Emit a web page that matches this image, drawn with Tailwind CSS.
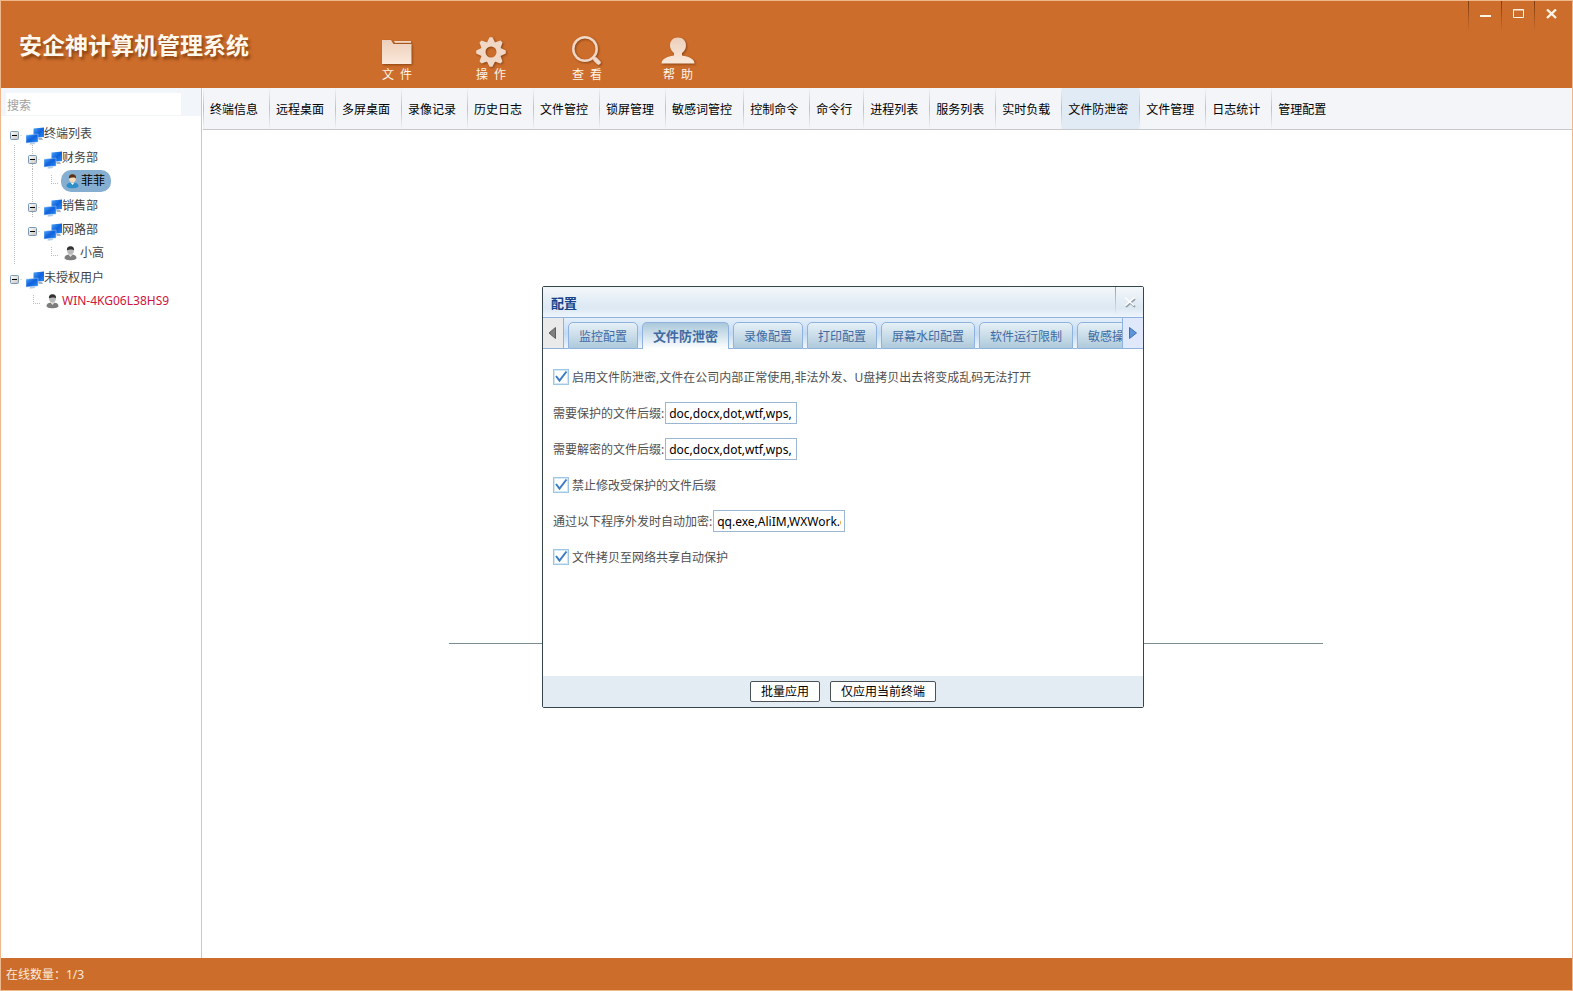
<!DOCTYPE html>
<html lang="zh-CN">
<head>
<meta charset="utf-8">
<title>安企神计算机管理系统</title>
<script src="https://cdn.jsdelivr.net/npm/@tailwindcss/browser@4"></script>
</head>
<body class="h-screen overflow-hidden bg-white font-['Noto_Sans','Noto_Sans_CJK_SC',sans-serif] text-xs text-[#444]">

<svg class="absolute h-0 w-0" aria-hidden="true">
  <defs>
    <linearGradient id="cream" x1="0" y1="0" x2="0" y2="1"><stop offset="0" stop-color="#eccfba"/><stop offset="1" stop-color="#fbe8da"/></linearGradient>
    <linearGradient id="screen" x1="0" y1="0" x2="1" y2="1"><stop offset="0" stop-color="#4fa6fb"/><stop offset=".5" stop-color="#0f62dc"/><stop offset="1" stop-color="#2b8cf5"/></linearGradient>
    <linearGradient id="knob" x1="0" y1="0" x2="1" y2="1"><stop offset="0" stop-color="#fff"/><stop offset="1" stop-color="#c9c3b8"/></linearGradient>
    <symbol id="pcs" viewBox="0 0 18 18">
      <path d="M12 11h4l1 2h-4z" fill="#a9b2bd"/>
      <path d="M7.500 1.500L18 .5v9.500l-10.500 1z" fill="url(#screen)"/>
      <path d="M0 8.200l12-1.200v8l-12 1z" fill="url(#screen)" stroke="#b7d3f3" stroke-width=".5"/>
      <path d="M4 16l4-.5 1.500 1.500-6 .7z" fill="#b5cbe0"/>
    </symbol>
    <symbol id="toggle" viewBox="0 0 18 24">
      <rect x="5.500" y="10.500" width="8" height="8" rx="1" fill="url(#knob)" stroke="#7898b5"/>
      <path d="M7 14.500h5" stroke="#000"/>
      <path d="M15.500 14.500h2" stroke="#bbb" stroke-dasharray="1 1"/>
    </symbol>
    <symbol id="toggle-down" viewBox="0 0 18 24">
      <path d="M9.500 0v10M9.500 19v5" stroke="#bbb" stroke-dasharray="1 1"/>
      <use href="#toggle"/>
    </symbol>
    <symbol id="line" viewBox="0 0 18 24"><path d="M9.500 0v24" stroke="#bbb" stroke-dasharray="1 1"/></symbol>
    <symbol id="elbow" viewBox="0 0 18 24"><path d="M10.500 6v9.500M10 14.500h9" fill="none" stroke="#bbb" stroke-dasharray="1 1"/></symbol>
    <symbol id="man" viewBox="0 0 13 15">
      <path d="M.5 12C.5 9.500 3 8.500 6.500 8.500S12.500 9.500 12.500 12c0 3-12 3-12 0z" fill="#7d7d7d"/>
      <path d="M4.500 8.500l2 2.500 2-2.500z" fill="#e5e5e5"/>
      <circle cx="6.500" cy="5" r="3.300" fill="#b9b9b9"/>
      <path d="M3 4.500C2.500 1.500 4.500.3 6.500.3S10.500 1.500 10 4.500C9 3 5 3.500 3 4.500z" fill="#333"/>
    </symbol>
  </defs>
</svg>

<div class="flex h-full flex-col border border-[#efb88c] bg-white">

  <header class="flex h-[87px] shrink-0 items-start bg-[#cd6d2b] text-white">
    <h1 class="w-[349px] shrink-0 pt-[26px] pl-[18px] text-[23px] leading-9 font-bold text-[#fff8ec] [text-shadow:2px_3px_3px_rgb(90_40_5/0.6)]">安企神计算机管理系统</h1>
    <nav class="grid flex-1 grid-cols-[94px_94px_98px_84px] pt-[34px]" aria-label="主菜单">
      <button class="flex flex-col items-center text-[#fff6e8]">
        <svg class="h-8 w-9 drop-shadow-[1px_1px_1px_rgb(90_40_5/0.6)]" viewBox="0 0 36 32" fill="url(#cream)"><path d="M3 5h9l2.500 4H32.500V29H3z"/><path d="M15 6h17v1.800H16z"/></svg>
        <span class="leading-4">文&nbsp; 件</span>
      </button>
      <button class="flex flex-col items-center text-[#fff6e8]">
        <svg class="h-8 w-9 drop-shadow-[1px_1px_1px_rgb(90_40_5/0.6)]" viewBox="0 0 36 32" fill="none"><g transform="translate(18 17)"><circle r="8" stroke="#f1d8c6" stroke-width="5"/><g fill="#f1d8c6"><path id="t" d="M-4-9.500L-1.500-14.800H1.500L4-9.500z"/><use href="#t" transform="rotate(45)"/><use href="#t" transform="rotate(90)"/><use href="#t" transform="rotate(135)"/><use href="#t" transform="rotate(180)"/><use href="#t" transform="rotate(225)"/><use href="#t" transform="rotate(270)"/><use href="#t" transform="rotate(315)"/></g></g></svg>
        <span class="leading-4">操&nbsp; 作</span>
      </button>
      <button class="flex flex-col items-center text-[#fff6e8]">
        <svg class="h-8 w-9 drop-shadow-[1px_1px_1px_rgb(90_40_5/0.6)]" viewBox="0 0 36 32" fill="none" stroke="#f1d8c6"><circle cx="16" cy="14" r="11.700" stroke-width="2.500"/><path d="M23.500 21.500l2 2" stroke-width="2"/><path d="M26.500 24.500l3 3" stroke-width="4.500" stroke-linecap="round"/></svg>
        <span class="leading-4">查&nbsp; 看</span>
      </button>
      <button class="flex flex-col items-center text-[#fff6e8]">
        <svg class="h-8 w-9 drop-shadow-[1px_1px_1px_rgb(90_40_5/0.6)]" viewBox="0 0 36 32" fill="url(#cream)"><path d="M18 2.500c5 0 8 3.500 8 8 0 3.500-2 6-4 7.500v2.500c7 1 12.500 3.500 12.500 8H1.500c0-4.500 5.500-7 12.500-8V18c-2-1.500-4-4-4-7.500 0-4.500 3-8 8-8z"/></svg>
        <span class="leading-4">帮&nbsp; 助</span>
      </button>
    </nav>
    <div class="flex pr-1">
      <button class="flex h-[30px] w-[33px] items-start justify-center border-l [border-image:linear-gradient(#7d3a0c,#cd6d2b)_1] pt-2" aria-label="最小化"><svg class="h-[10px] w-[11px]" viewBox="0 0 11 10"><path d="M0 7h11" stroke="#fff3e6" stroke-width="2"/></svg></button>
      <button class="flex h-[30px] w-[33px] items-start justify-center border-l [border-image:linear-gradient(#7d3a0c,#cd6d2b)_1] pt-2" aria-label="最大化"><svg class="h-[10px] w-[11px]" viewBox="0 0 11 10" fill="none" stroke="#fff3e6"><path d="M.5 .5h10v8H.500zM0 1h11"/></svg></button>
      <button class="flex h-[30px] w-[34px] items-start justify-center border-l [border-image:linear-gradient(#7d3a0c,#cd6d2b)_1] pt-2" aria-label="关闭"><svg class="h-[10px] w-[11px]" viewBox="0 0 11 10"><path d="M1 .5l9 8.500M10 .5L1 9" stroke="#fff3e6" stroke-width="2.400"/></svg></button>
    </div>
  </header>

  <div class="flex min-h-0 flex-1">
    <aside class="w-[201px] shrink-0 border-r border-[#c8c8c8]">
      <div class="h-7 bg-[#f2f5fa] pt-[5px] pl-[5px]">
        <input type="text" aria-label="搜索" placeholder="搜索" class="block h-[22px] w-[175px] bg-white px-px pt-[2px] outline-none placeholder:text-[#a0a0a0]">
      </div>
      <ul class="pt-[5px] pl-1 leading-[26px]">
        <li>
          <div class="flex h-6"><svg class="mr-[3px] h-6 w-[18px]"><use href="#toggle"/></svg><svg class="mt-[6px] h-[18px] w-[18px]"><use href="#pcs"/></svg><span>终端列表</span></div>
          <ul>
            <li>
              <div class="flex h-6"><svg class="h-6 w-[18px]"><use href="#line"/></svg><svg class="mr-[3px] h-6 w-[18px]"><use href="#toggle-down"/></svg><svg class="mt-[6px] h-[18px] w-[18px]"><use href="#pcs"/></svg><span>财务部</span></div>
              <ul><li class="flex h-6 items-center"><svg class="h-6 w-[18px]"><use href="#line"/></svg><svg class="h-6 w-[18px]"><use href="#line"/></svg><svg class="mr-[2px] h-6 w-[18px]"><use href="#elbow"/></svg>
                <span class="flex h-[22px] w-[50px] items-center rounded-[10px] bg-[#86aed0] pl-[5px] text-black"><svg class="mr-[2px] h-[15px] w-[13px]" viewBox="0 0 13 15"><path d="M.5 12C.5 9.500 3 8.500 6.500 8.500S12.500 9.500 12.500 12c0 3-12 3-12 0z" fill="#2d8fca"/><path d="M4.500 8.500l2 2.500 2-2.500z" fill="#fff"/><circle cx="6.500" cy="5" r="3.300" fill="#f8d9b8"/><path d="M3 4.500C2.500 1.500 4.500.3 6.500.3S10.500 1.500 10 4.500C9 3 5 3.500 3 4.500z" fill="#5b3216"/></svg>菲菲</span></li></ul>
            </li>
            <li class="flex h-6"><svg class="h-6 w-[18px]"><use href="#line"/></svg><svg class="mr-[3px] h-6 w-[18px]"><use href="#toggle-down"/></svg><svg class="mt-[6px] h-[18px] w-[18px]"><use href="#pcs"/></svg><span>销售部</span></li>
            <li>
              <div class="flex h-6"><svg class="h-6 w-[18px]"><use href="#line"/></svg><svg class="mr-[3px] h-6 w-[18px]"><use href="#toggle"/></svg><svg class="mt-[6px] h-[18px] w-[18px]"><use href="#pcs"/></svg><span>网路部</span></div>
              <ul><li class="flex h-6 items-center"><svg class="mr-[18px] h-6 w-[18px]"><use href="#line"/></svg><svg class="mr-[5px] h-6 w-[18px]"><use href="#elbow"/></svg><svg class="mr-[3px] h-[15px] w-[13px]"><use href="#man"/></svg><span>小高</span></li></ul>
            </li>
          </ul>
        </li>
        <li>
          <div class="flex h-6"><svg class="mr-[3px] h-6 w-[18px]"><use href="#toggle"/></svg><svg class="mt-[6px] h-[18px] w-[18px]"><use href="#pcs"/></svg><span>未授权用户</span></div>
          <ul><li class="flex h-6 items-center"><svg class="mr-[5px] ml-[18px] h-6 w-[18px]"><use href="#elbow"/></svg><svg class="mr-[3px] h-[15px] w-[13px]"><use href="#man"/></svg><span class="text-[#d0143c]">WIN-4KG06L38HS9</span></li></ul>
        </li>
      </ul>
    </aside>

    <main class="relative min-w-0 flex-1 pl-px">
      <nav class="flex h-[42px] border-b border-[#c8c8cc] bg-[#f3f5f9] text-black" aria-label="功能">
        <button class="border-l [border-image:linear-gradient(#f3f5f9,#9fcbe2,#f3f5f9)_1] pt-[2px] pr-[11px] pl-[6px]">终端信息</button>
        <button class="border-l [border-image:linear-gradient(#f3f5f9,#9fcbe2,#f3f5f9)_1] pt-[2px] pr-[11px] pl-[6px]">远程桌面</button>
        <button class="border-l [border-image:linear-gradient(#f3f5f9,#9fcbe2,#f3f5f9)_1] pt-[2px] pr-[11px] pl-[6px]">多屏桌面</button>
        <button class="border-l [border-image:linear-gradient(#f3f5f9,#9fcbe2,#f3f5f9)_1] pt-[2px] pr-[11px] pl-[6px]">录像记录</button>
        <button class="border-l [border-image:linear-gradient(#f3f5f9,#9fcbe2,#f3f5f9)_1] pt-[2px] pr-[11px] pl-[6px]">历史日志</button>
        <button class="border-l [border-image:linear-gradient(#f3f5f9,#9fcbe2,#f3f5f9)_1] pt-[2px] pr-[11px] pl-[6px]">文件管控</button>
        <button class="border-l [border-image:linear-gradient(#f3f5f9,#9fcbe2,#f3f5f9)_1] pt-[2px] pr-[11px] pl-[6px]">锁屏管理</button>
        <button class="border-l [border-image:linear-gradient(#f3f5f9,#9fcbe2,#f3f5f9)_1] pt-[2px] pr-[11px] pl-[6px]">敏感词管控</button>
        <button class="border-l [border-image:linear-gradient(#f3f5f9,#9fcbe2,#f3f5f9)_1] pt-[2px] pr-[11px] pl-[6px]">控制命令</button>
        <button class="border-l [border-image:linear-gradient(#f3f5f9,#9fcbe2,#f3f5f9)_1] pt-[2px] pr-[11px] pl-[6px]">命令行</button>
        <button class="border-l [border-image:linear-gradient(#f3f5f9,#9fcbe2,#f3f5f9)_1] pt-[2px] pr-[11px] pl-[6px]">进程列表</button>
        <button class="border-l [border-image:linear-gradient(#f3f5f9,#9fcbe2,#f3f5f9)_1] pt-[2px] pr-[11px] pl-[6px]">服务列表</button>
        <button class="border-l [border-image:linear-gradient(#f3f5f9,#9fcbe2,#f3f5f9)_1] pt-[2px] pr-[11px] pl-[6px]">实时负载</button>
        <button class="border-l bg-[#e1ebf5] [border-image:linear-gradient(#f3f5f9,#9fcbe2,#f3f5f9)_1] pt-[2px] pr-[11px] pl-[6px]" aria-current="page">文件防泄密</button>
        <button class="border-l [border-image:linear-gradient(#f3f5f9,#9fcbe2,#f3f5f9)_1] pt-[2px] pr-[11px] pl-[6px]">文件管理</button>
        <button class="border-l [border-image:linear-gradient(#f3f5f9,#9fcbe2,#f3f5f9)_1] pt-[2px] pr-[11px] pl-[6px]">日志统计</button>
        <button class="border-l [border-image:linear-gradient(#f3f5f9,#9fcbe2,#f3f5f9)_1] pt-[2px] pr-[11px] pl-[6px]">管理配置</button>
      </nav>

      <div class="pr-1"><hr class="mx-auto mt-[513px] w-[874px] border-[#7b8b94]"></div>

      <section role="dialog" aria-labelledby="dlg-title" class="absolute top-[198px] left-[340px] w-[602px] rounded-xs border border-[#34454b] bg-white text-[#505050]">
        <div class="flex h-[31px] border-b border-[#8fb2de] bg-linear-to-b from-[#f3f7fa] via-[#dce8f3] via-70% to-[#eef5fb]">
          <h2 id="dlg-title" class="flex-1 pl-2 text-[13px] leading-8 font-bold text-[#15428b]">配置</h2>
          <button class="flex h-[26px] w-7 items-center justify-center border-l [border-image:linear-gradient(#8fa0ac,#dce8f3)_1]" aria-label="关闭"><svg class="mt-[3px] h-3 w-3" viewBox="0 0 12 12"><path d="M6 6.500l5 4.500M11 3L2 11" stroke="#98a3ac" stroke-width="2"/><path d="M1 1.500l9 8M10.500 1.500l-9 8" stroke="#fff" stroke-width="1.500"/></svg></button>
        </div>
        <div class="flex h-[31px] bg-linear-to-b from-[#e4eff9] via-[#c3daf3] to-[#f2f8fd]">
          <button class="flex w-[21px] shrink-0 items-center border-r border-b border-[#8fb2de] bg-[#eaeaea] pl-[5px]" aria-label="向左滚动"><svg class="h-3 w-2" viewBox="0 0 8 12"><path d="M7.500.5v11L1 6z" fill="#808080" stroke="#5e5e5e"/></svg></button>
          <div class="flex min-w-0 flex-1 overflow-hidden" role="tablist">
            <div class="w-1 shrink-0 border-b border-[#8fb2de]"></div>
            <button role="tab" class="mt-1 shrink-0 rounded-t-[5px] border border-[#8fb2de] bg-linear-to-b from-[#e6f0f7] to-[#aecadb] px-[10px] pt-[2px] text-[#416aa3]">监控配置</button>
            <div class="w-1 shrink-0 border-b border-[#8fb2de]"></div>
            <button role="tab" aria-selected="true" class="mt-1 shrink-0 rounded-t-[5px] border border-b-0 border-[#8fb2de] bg-linear-to-b from-[#aac8da] to-white px-[10px] pt-px text-[13px] font-bold text-[#416aa3]">文件防泄密</button>
            <div class="w-1 shrink-0 border-b border-[#8fb2de]"></div>
            <button role="tab" class="mt-1 shrink-0 rounded-t-[5px] border border-[#8fb2de] bg-linear-to-b from-[#e6f0f7] to-[#aecadb] px-[10px] pt-[2px] text-[#416aa3]">录像配置</button>
            <div class="w-1 shrink-0 border-b border-[#8fb2de]"></div>
            <button role="tab" class="mt-1 shrink-0 rounded-t-[5px] border border-[#8fb2de] bg-linear-to-b from-[#e6f0f7] to-[#aecadb] px-[10px] pt-[2px] text-[#416aa3]">打印配置</button>
            <div class="w-1 shrink-0 border-b border-[#8fb2de]"></div>
            <button role="tab" class="mt-1 shrink-0 rounded-t-[5px] border border-[#8fb2de] bg-linear-to-b from-[#e6f0f7] to-[#aecadb] px-[10px] pt-[2px] text-[#416aa3]">屏幕水印配置</button>
            <div class="w-1 shrink-0 border-b border-[#8fb2de]"></div>
            <button role="tab" class="mt-1 shrink-0 rounded-t-[5px] border border-[#8fb2de] bg-linear-to-b from-[#e6f0f7] to-[#aecadb] px-[10px] pt-[2px] text-[#416aa3]">软件运行限制</button>
            <div class="w-1 shrink-0 border-b border-[#8fb2de]"></div>
            <button role="tab" class="mt-1 shrink-0 rounded-tl-[5px] border border-[#8fb2de] bg-linear-to-b from-[#e6f0f7] to-[#aecadb] px-[10px] pt-[2px] text-[#416aa3]">敏感操作</button>
          </div>
          <button class="flex w-[21px] shrink-0 items-center justify-center border-b border-l border-[#8fb2de] bg-[#dfe9fb]" aria-label="向右滚动"><svg class="h-3 w-2" viewBox="0 0 8 12"><path d="M.5.500v11L7.500 6z" fill="#5c95d8" stroke="#3c70b4"/></svg></button>
        </div>
        <form class="flex h-[327px] flex-col pt-[10px] pl-[10px]">
          <div class="relative flex h-9 items-center"><input id="c1" type="checkbox" checked class="mr-[3px] h-4 w-4 appearance-none border border-[#9fc6e4] bg-white outline-1 -outline-offset-2 outline-[#d4e8f3]"><svg class="pointer-events-none absolute left-0 h-4 w-4" viewBox="0 0 16 16"><path d="M3 7l3.500 4.500L13.500 2.500" fill="none" stroke="#3d7cc4" stroke-width="2"/></svg><label for="c1" class="pt-[2px]">启用文件防泄密,文件在公司内部正常使用,非法外发、U盘拷贝出去将变成乱码无法打开</label></div>
          <div class="flex h-9 items-center"><label for="i1" class="pt-[2px] pr-px">需要保护的文件后缀:</label><input id="i1" type="text" value="doc,docx,dot,wtf,wps," class="h-[22px] w-[132px] border border-[#9ab6d2] px-[3px] text-black outline-none"></div>
          <div class="flex h-9 items-center"><label for="i2" class="pt-[2px] pr-px">需要解密的文件后缀:</label><input id="i2" type="text" value="doc,docx,dot,wtf,wps," class="h-[22px] w-[132px] border border-[#9ab6d2] px-[3px] text-black outline-none"></div>
          <div class="relative flex h-9 items-center"><input id="c2" type="checkbox" checked class="mr-[3px] h-4 w-4 appearance-none border border-[#9fc6e4] bg-white outline-1 -outline-offset-2 outline-[#d4e8f3]"><svg class="pointer-events-none absolute left-0 h-4 w-4" viewBox="0 0 16 16"><path d="M3 7l3.500 4.500L13.500 2.500" fill="none" stroke="#3d7cc4" stroke-width="2"/></svg><label for="c2" class="pt-[2px]">禁止修改受保护的文件后缀</label></div>
          <div class="flex h-9 items-center"><label for="i3" class="pt-[2px] pr-px">通过以下程序外发时自动加密:</label><input id="i3" type="text" value="qq.exe,AliIM,WXWork.exe" class="h-[22px] w-[132px] border border-[#9ab6d2] px-[3px] text-black outline-none"></div>
          <div class="relative flex h-9 items-center"><input id="c3" type="checkbox" checked class="mr-[3px] h-4 w-4 appearance-none border border-[#9fc6e4] bg-white outline-1 -outline-offset-2 outline-[#d4e8f3]"><svg class="pointer-events-none absolute left-0 h-4 w-4" viewBox="0 0 16 16"><path d="M3 7l3.500 4.500L13.500 2.500" fill="none" stroke="#3d7cc4" stroke-width="2"/></svg><label for="c3" class="pt-[2px]">文件拷贝至网络共享自动保护</label></div>
        </form>
        <div class="flex h-[31px] items-center justify-center gap-[10px] bg-[#e3ebf3] text-black">
          <button class="h-[21px] rounded-xs border border-[#4a5257] bg-white px-[10px] pt-px">批量应用</button>
          <button class="h-[21px] rounded-xs border border-[#4a5257] bg-white px-[10px] pt-px">仅应用当前终端</button>
        </div>
      </section>
    </main>
  </div>

  <footer class="flex h-8 shrink-0 items-center bg-[#cd6d2b] pt-[2px] pl-[5px] text-[#fbeadb]">在线数量：1/3</footer>
</div>
</body>
</html>
